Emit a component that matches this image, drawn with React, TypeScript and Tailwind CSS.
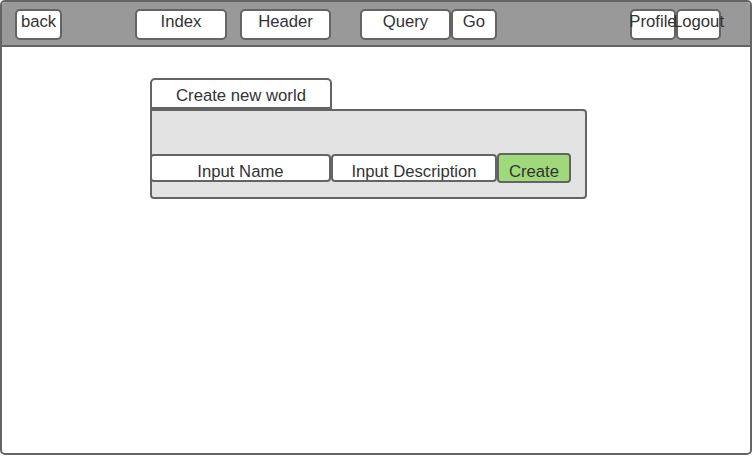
import React from "react";

const font = { fontFamily: '"Liberation Sans", Arial, sans-serif' };

function HBtn({ label, w, ml }: { label: string; w: string; ml: string }) {
  return (
    <div
      className={`${w} ${ml} h-[31px] shrink-0 border-2 border-[#646464] rounded-[5px] bg-white flex justify-center items-start pt-[2px] text-[16.7px] leading-[18px] text-[#333] whitespace-nowrap`}
    >
      {label}
    </div>
  );
}

export default function App() {
  return (
    <div style={font} className="w-[753px] h-[456px] bg-white">
      <div className="w-[752px] h-[455px] border-2 border-[#646464] rounded-[5px] overflow-hidden bg-white flex flex-col">
        <div className="h-[45px] shrink-0 bg-[#999999] border-b-2 border-[#646464] flex items-start pt-[7px]">
          <HBtn label="back" w="w-[47px]" ml="ml-[13px]" />
          <HBtn label="Index" w="w-[92px]" ml="ml-[73px]" />
          <HBtn label="Header" w="w-[91px]" ml="ml-[13px]" />
          <HBtn label="Query" w="w-[91px]" ml="ml-[29px]" />
          <HBtn label="Go" w="w-[46px]" ml="ml-0" />
          <HBtn label="Profile" w="w-[46px]" ml="ml-[133px]" />
          <HBtn label="Logout" w="w-[45px]" ml="ml-0" />
        </div>
        <div className="flex flex-col ml-[148px] mt-[31px]">
          <div className="w-[182px] h-[31px] border-2 border-[#646464] rounded-t-[5px] bg-white flex justify-center items-start pt-[7px] text-[16.7px] leading-[18px] text-[#333]">
            Create new world
          </div>
          <div className="w-[437px] h-[90px] border-2 border-[#646464] rounded-[4px] rounded-tl-none bg-[#e3e3e3] flex flex-col">
            <div className="flex items-start -ml-[2px] mt-[43px]">
              <div className="w-[181px] h-[28px] border-2 border-[#646464] rounded-[4px] bg-white flex justify-center items-start pt-[7px] text-[16.7px] leading-[18px] text-[#333]">
                Input Name
              </div>
              <div className="w-[166px] h-[28px] border-2 border-[#646464] rounded-[4px] bg-white flex justify-center items-start pt-[7px] text-[16.7px] leading-[18px] text-[#333]">
                Input Description
              </div>
              <div className="w-[74px] h-[30px] -mt-[1px] border-2 border-[#646464] rounded-[4px] bg-[#a0d97a] flex justify-center items-start pt-[8px] text-[16.7px] leading-[18px] text-[#333]">
                Create
              </div>
            </div>
          </div>
        </div>
      </div>
    </div>
  );
}
